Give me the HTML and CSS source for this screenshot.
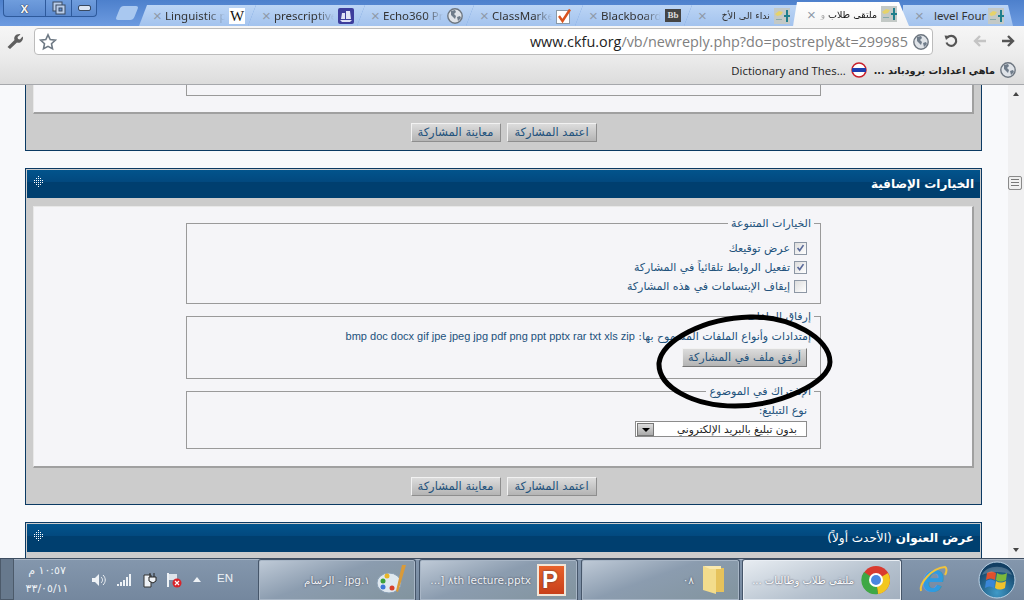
FILE: index.html
```html
<!DOCTYPE html>
<html lang="ar">

<head>
    <meta charset="UTF-8">
    <title>ملتقى طلاب وطالبات</title>
    <link rel="stylesheet" href="styles.css">
</head>

<body>
    <svg class="defs" width="0" height="0">
        <symbol id="globe" viewBox="0 0 16 16">
            <circle cx="8" cy="8" r="7.2" fill="#dfe3e8" stroke="#6d7680" stroke-width="1.4" />
            <path d="M4 3l4-1 1 2-2 2 2 2-1 3-2-2-2-2zM10 9l3-1 1 2-3 3z" fill="#6f7c8a" />
        </symbol>
        <symbol id="forum" viewBox="0 0 16 16">
            <rect width="16" height="16" fill="#c3c9c6" />
            <path d="M1 6l4-3 4 1-2 3-4 1z" fill="#e6d36a" />
            <path d="M12 2h2v12h-2zM10 7h6v2h-6z" fill="#1f7f8c" />
            <path d="M2 11h6v1H2z" fill="#8aa" />
        </symbol>
        <symbol id="grip" viewBox="0 0 9 11">
            <g fill="#fff">
                <path d="M4 0h1v1H4zM2 2h1v1H2zM4 2h1v1H4zM6 2h1v1H6zM0 4h1v1H0zM2 4h1v1H2zM4 4h1v1H4zM6 4h1v1H6zM8 4h1v1H8zM0 6h1v1H0zM2 6h1v1H2zM4 6h1v1H4zM6 6h1v1H6zM8 6h1v1H8zM2 8h1v1H2zM4 8h1v1H4zM6 8h1v1H6zM4 10h1v1H4z" />
            </g>
        </symbol>
        <symbol id="tick" viewBox="0 0 13 13">
            <path d="M3 6l2.500 3L10 2.500" fill="none" stroke="#5a6a9a" stroke-width="2" />
        </symbol>
    </svg>

    <div class="tabstrip">
        <div class="wincontrols">
            <span class="winbtn winclose">x</span>
            <span class="winbtn winrestore">
                <svg viewBox="0 0 14 14" width="14" height="14">
                    <rect x="1" y="1" width="9" height="9" fill="#b9cdea" stroke="#3a4a60" />
                    <rect x="4" y="4" width="9" height="9" fill="#b9cdea" stroke="#3a4a60" />
                    <rect x="7" y="7" width="3" height="3" fill="#5a89cf" stroke="#3a4a60" />
                </svg>
            </span>
            <span class="winbtn winmin"><i></i></span>
        </div>
        <div class="newtab"></div>
        <div class="tab">
            <span class="tabx">×</span><span class="tabtitle">Linguistic p</span>
            <span class="fav fav-w">W</span>
        </div>
        <div class="tab">
            <span class="tabx">×</span><span class="tabtitle">prescriptive</span>
            <svg class="fav" viewBox="0 0 16 16">
                <rect width="16" height="16" rx="2" fill="#3d3d9c" />
                <path d="M3 11l1-6h3v6zM8 11V3h4l1 8zM2 12h12l-2 2H4z" fill="#dfe2f5" />
            </svg>
        </div>
        <div class="tab">
            <span class="tabx">×</span><span class="tabtitle">Echo360 Pr</span>
            <svg class="fav"><use href="#globe" /></svg>
        </div>
        <div class="tab">
            <span class="tabx">×</span><span class="tabtitle">ClassMarke</span>
            <svg class="fav" viewBox="0 0 16 16">
                <rect x=".5" y="2.500" width="13" height="13" fill="#fff" stroke="#8a9aa8" />
                <path d="M3 8l3.500 5L14 1.500" fill="none" stroke="#d9531e" stroke-width="2.400" />
            </svg>
        </div>
        <div class="tab">
            <span class="tabx">×</span><span class="tabtitle">Blackboard</span>
            <span class="fav fav-bb">Bb</span>
        </div>
        <div class="tab">
            <span class="tabx">×</span><span class="tabtitle tabtitle-ar" dir="rtl">نداء الى الأخ</span>
            <svg class="fav"><use href="#forum" /></svg>
        </div>
        <div class="tab tab-active">
            <span class="tabx">×</span><span class="tabtitle tabtitle-ar" dir="rtl">ملتقى طلاب و</span>
            <svg class="fav"><use href="#forum" /></svg>
        </div>
        <div class="tab tab-last">
            <span class="tabx">×</span><span class="tabtitle tabtitle-end">level Four</span>
            <svg class="fav"><use href="#forum" /></svg>
        </div>
    </div>

    <div class="toolbar">
        <svg class="wrench" viewBox="0 0 18 18">
            <path d="M1.500 15l7-7c-1-3 1-6 5-6l1 .5-3 2.500.5 2 2 .5 2.500-3 .5 1c0 4-3 6-6 5l-7 6.500z" fill="#5f5f5f" />
        </svg>
        <div class="omnibox">
            <svg class="star" viewBox="0 0 18 18">
                <path d="M9 1.800l2.200 4.800 5.100.6-3.800 3.500 1 5.100L9 13.300l-4.500 2.500 1-5.100-3.800-3.500 5.100-.6z" fill="#fff" stroke="#6f7a85" stroke-width="1.600" />
            </svg>
            <div class="url"><b>www.ckfu.org</b>/vb/newreply.php?do=postreply&amp;t=299985</div>
            <svg class="omniglobe"><use href="#globe" /></svg>
        </div>
        <svg class="navicon nav-reload" viewBox="0 0 16 16">
            <path d="M4.500 4.500a5 5 0 1 1-1 5" fill="none" stroke="#555" stroke-width="2.200" />
            <path d="M1.500 2.500l6 .5-4.500 4z" fill="#555" />
        </svg>
        <svg class="navicon nav-back" viewBox="0 0 16 16">
            <path d="M14 8H4M8 3L3 8l5 5" fill="none" stroke="#c4c4c4" stroke-width="2.400" />
        </svg>
        <svg class="navicon nav-forward" viewBox="0 0 16 16">
            <path d="M2 8h10M8 3l5 5-5 5" fill="none" stroke="#555" stroke-width="2.400" />
        </svg>
    </div>

    <div class="bookmarks">
        <span class="bmtext">Dictionary and Thes...</span>
        <svg class="bmicon" viewBox="0 0 16 16">
            <circle cx="8" cy="8" r="7" fill="#fff" stroke="#c8202c" stroke-width="1.500" />
            <rect x="1" y="6" width="14" height="4" fill="#1c3fb0" />
        </svg>
        <span class="bmtext bmtext-ar" dir="rtl">ماهي اعدادات برودباند ...</span>
        <svg class="bmglobe"><use href="#globe" /></svg>
    </div>

    <div class="viewport">
        <div class="page">
            <div class="panel panel-cut">
                <div class="panelbody">
                    <div class="inner inner-cut">
                        <div class="cutbox"></div>
                    </div>
                    <div class="actions">
                        <span class="btn">معاينة المشاركة</span>
                        <span class="btn">اعتمد المشاركة</span>
                    </div>
                </div>
            </div>

            <div class="panel panel-options">
                <div class="panelhead">
                    <span class="paneltitle" dir="rtl">الخيارات الإضافية</span>
                    <svg class="grip"><use href="#grip" /></svg>
                </div>
                <div class="panelbody">
                    <div class="inner">
                        <fieldset class="group group-misc" dir="rtl">
                            <legend>الخيارات المتنوعة</legend>
                            <div class="checkrow"><span class="check"><svg><use href="#tick" /></svg></span>عرض توقيعك</div>
                            <div class="checkrow"><span class="check"><svg><use href="#tick" /></svg></span>تفعيل الروابط تلقائياً في المشاركة</div>
                            <div class="checkrow"><span class="check"></span>إيقاف الإبتسامات في هذه المشاركة</div>
                        </fieldset>
                        <fieldset class="group group-attach" dir="rtl">
                            <legend>إرفاق الملفات</legend>
                            <div class="exts">إمتدادات وأنواع الملفات المسموح بها: <span class="extlist" dir="ltr">bmp doc docx gif jpe jpeg jpg pdf png ppt pptx rar txt xls zip</span></div>
                            <span class="btn btn-attach">أرفق ملف في المشاركة</span>
                        </fieldset>
                        <fieldset class="group group-sub" dir="rtl">
                            <legend>الإشتراك في الموضوع</legend>
                            <div class="sublabel">نوع التبليغ:</div>
                            <div class="select">
                                <span class="selecttext">بدون تبليغ بالبريد الإلكتروني</span>
                                <span class="selectarrow"></span>
                            </div>
                        </fieldset>
                    </div>
                    <div class="actions">
                        <span class="btn">معاينة المشاركة</span>
                        <span class="btn">اعتمد المشاركة</span>
                    </div>
                </div>
            </div>

            <div class="panel panel-thread">
                <div class="panelhead">
                    <span class="paneltitle" dir="rtl">عرض العنوان <span class="lighter">(الأحدث أولاً)</span></span>
                    <svg class="grip"><use href="#grip" /></svg>
                </div>
                <div class="panelbody"></div>
            </div>
        </div>
        <div class="scrollbar">
            <span class="sb-up"></span>
            <span class="sb-thumb"></span>
            <span class="sb-down"></span>
        </div>
        <svg class="scribble" viewBox="0 0 190 105" width="190" height="105">
            <path d="M9 53C12 30 55 8 100 7c40-1 80 21 80 45 0 20-50 44-95 44C45 96 8 78 9 53z" fill="none" stroke="#000" stroke-width="5" />
        </svg>
    </div>

    <div class="taskbar">
        <div class="showdesk"></div>
        <div class="clock" dir="rtl">
            <div>١٠:٥٧ م</div>
            <div>٣٣/٠٥/١١</div>
        </div>
        <div class="tray">
            <svg viewBox="0 0 16 16">
                <path d="M1 6h3l4-4v12l-4-4H1z" fill="#eef2f6" />
                <path d="M10 5c2 2 2 4 0 6M12 3c3 3 3 7 0 10" fill="none" stroke="#eef2f6" />
            </svg>
            <svg viewBox="0 0 16 16">
                <path d="M1 12h2v2H1zM4 10h2v4H4zM7 8h2v6H7zM10 5h2v9h-2zM13 2h2v12h-2z" fill="#eef2f6" />
            </svg>
            <svg viewBox="0 0 16 16">
                <path d="M3 3h7v12H3z" fill="#eef2f6" stroke="#333" />
                <path d="M9 1v4M13 1v4M8 5h7v4l-3 2-4-2z" fill="#eef2f6" stroke="#222" />
            </svg>
            <svg viewBox="0 0 16 16">
                <path d="M2 1v14" stroke="#eef2f6" stroke-width="2" />
                <path d="M3 2h8v6H3z" fill="#dde3ea" />
                <circle cx="11" cy="11" r="4.500" fill="#d8232a" />
                <path d="M9 9l4 4M13 9l-4 4" stroke="#fff" stroke-width="1.200" />
            </svg>
            <span class="trayup"></span>
            <span class="lang">EN</span>
        </div>
        <div class="tasks">
            <div class="task">
                <span class="tasktext" dir="rtl">١.jpg - الرسام</span>
                <svg class="taskicon" viewBox="0 0 32 32">
                    <ellipse cx="13" cy="19" rx="12" ry="10" fill="#dfe8ef" stroke="#8aa0b5" />
                    <circle cx="7" cy="17" r="2.500" fill="#3aa13a" />
                    <circle cx="11" cy="12" r="2.500" fill="#e8b526" />
                    <circle cx="7" cy="23" r="2.500" fill="#3b77d8" />
                    <circle cx="16" cy="24" r="2.500" fill="#d8402c" />
                    <path d="M30 1l-8 27-2-1 6-26z" fill="#d89a3a" />
                </svg>
            </div>
            <div class="task">
                <span class="tasktext" dir="ltr">...] ٨th lecture.pptx</span>
                <span class="taskicon ppt">P</span>
            </div>
            <div class="task">
                <span class="tasktext" dir="rtl">٠٨</span>
                <svg class="taskicon" viewBox="0 0 32 32">
                    <path d="M3 2l13 3v25L3 26z" fill="#f3dc8c" />
                    <path d="M16 4h8v24h-8z" fill="#e6c25c" />
                    <path d="M3 2h18v3H10z" fill="#fae9ae" />
                </svg>
            </div>
            <div class="task task-active">
                <span class="tasktext" dir="rtl">ملتقى طلاب وطالبات ...</span>
                <svg class="taskicon" viewBox="0 0 32 32">
                    <circle cx="16" cy="16" r="14" fill="#d93a2f" />
                    <path d="M16 16L28 9a14 14 0 0 1-10 21z" fill="#f2c71e" />
                    <path d="M16 16l2 14A14 14 0 0 1 4 8z" fill="#3ea845" />
                    <circle cx="16" cy="16" r="7" fill="#fff" />
                    <circle cx="16" cy="16" r="5" fill="#4a86e0" />
                </svg>
            </div>
        </div>
        <div class="pinned">
            <div class="pin-ie">
                <span class="ie-e">e</span>
                <svg class="ie-ring" viewBox="0 0 32 32">
                    <path d="M4 27C2 20 14 4 28 3c2 1 2 4 0 8" fill="none" stroke="#f0c33c" stroke-width="2" />
                </svg>
            </div>
            <svg class="orb" viewBox="0 0 38 38">
                <defs>
                    <radialGradient id="orbfill" cx="50%" cy="85%" r="75%">
                        <stop offset="0" stop-color="#3f9ac8" />
                        <stop offset="1" stop-color="#123f63" />
                    </radialGradient>
                </defs>
                <circle cx="19" cy="19" r="18" fill="url(#orbfill)" stroke="#bcd3e6" />
                <path d="M9 12c3-2 6-2 9 0l-1 7c-3-2-6-2-9 0z" fill="#e0502c" />
                <path d="M19 12c3 2 6 2 10 0l-1 7c-4 2-7 2-10 0z" fill="#7db83a" />
                <path d="M8 20c3-2 6-2 9 0l-1 7c-3-2-6-2-9 0z" fill="#3a86d8" />
                <path d="M18 20c3 2 6 2 10 0l-1 7c-4 2-7 2-10 0z" fill="#f0c22c" />
                <path d="M4 14C8 3 30 3 34 14 26 10 12 10 4 14z" fill="#fff" opacity=".22" />
            </svg>
        </div>
    </div>
</body>

</html>
```

FILE: styles.css
```css
* {
    padding: 0;
    margin: 0;
    box-sizing: border-box;
}

html,
body {
    width: 1024px;
    height: 600px;
    overflow: hidden;
}

body {
    display: flex;
    flex-direction: column;
    background: #f8f9fb;
    font-family: "Liberation Sans", "DejaVu Sans", sans-serif;
    font-size: 11px;
    color: #22527c;
}

.defs {
    display: none;
}

/* chrome tabs */
.tabstrip {
    flex: 0 0 26px;
    height: 26px;
    display: flex;
    align-items: flex-end;
    padding-left: 3px;
    background: linear-gradient(#4d80cc, #6d9be0);
}

.wincontrols {
    display: flex;
    align-self: flex-start;
    height: 17px;
    width: 94px;
    border: 1px solid #2e5a9c;
    border-top: 0;
    border-radius: 0 0 4px 4px;
    background: linear-gradient(#6f9ddd, #5a89cf);
}

.winbtn {
    display: flex;
    align-items: center;
    justify-content: center;
    border-right: 1px solid #2e5a9c;
    color: #f2f5fa;
}

.winclose {
    width: 42px;
    font: bold 14px/16px "Liberation Sans", sans-serif;
    text-shadow: 0 0 1px #223, 0 0 1px #223;
}

.winrestore {
    width: 26px;
}

.winmin {
    flex: 1;
    border-right: 0;
}

.winmin i {
    width: 11px;
    height: 4px;
    background: #dbe5f3;
    outline: 1px solid #3a4a60;
    border-radius: 1px;
}

.newtab {
    width: 18px;
    height: 14px;
    margin: 0 3px 6px 21px;
    background: #a9c8f0;
    border-radius: 3px;
    transform: skewX(-22deg);
}

.tab {
    width: 117px;
    height: 21px;
    margin-right: -8px;
    display: flex;
    align-items: center;
    padding: 0 5px 0 14px;
    background: linear-gradient(#bcd5f5, #a3c3ee);
    clip-path: polygon(0 100%, 8px 0, 100% 0, 109px 100%);
    font: 11.500px "Noto Sans", sans-serif;
    color: #333;
    white-space: nowrap;
}

.tabx {
    width: 12px;
    flex: none;
    color: #8f9aa8;
    font: 15px "Liberation Sans", sans-serif;
}

.tabtitle {
    flex: 1;
    min-width: 0;
    -webkit-mask-image: linear-gradient(to right, #000 70%, transparent);
    mask-image: linear-gradient(to right, #000 70%, transparent);
}

.tabtitle-ar {
    font: 9.500px "DejaVu Sans", sans-serif;
    text-align: right;
    -webkit-mask-image: linear-gradient(to right, transparent, #000 20%);
    mask-image: linear-gradient(to right, transparent, #000 20%);
}

.tabtitle-end {
    padding-left: 7px;
    -webkit-mask-image: none;
    mask-image: none;
}

.fav {
    flex: none;
    width: 16px;
    height: 16px;
    margin: 0 6px 0 4px;
}

.fav-w {
    background: #fff;
    color: #111;
    font: 15px/16px "Liberation Serif", serif;
    text-align: center;
}

.fav-bb {
    background: #444;
    color: #ddd;
    font: bold 9px/13px "Liberation Serif", serif;
    text-align: center;
    height: 13px;
}

.tab-active {
    position: relative;
    z-index: 2;
    width: 116px;
    height: 24px;
    margin-right: -6px;
    padding-right: 6px;
    background: linear-gradient(#fff, #f4f4f4);
    clip-path: polygon(0 100%, 4px 0, 106px 0, 100% 100%);
    color: #111;
}

.tab-last {
    width: 110px;
    padding-left: 12px;
    padding-right: 3px;
    clip-path: polygon(0 100%, 0 0, 105px 0, 100% 100%);
}

.tab-last .fav {
    margin-left: 0;
}

/* toolbar */
.toolbar {
    flex: 0 0 30px;
    display: flex;
    align-items: center;
    background: linear-gradient(#f6f6f6, #ececec);
}

.wrench {
    width: 18px;
    height: 18px;
    margin: 0 10px 0 6px;
}

.omnibox {
    width: 899px;
    height: 27px;
    margin-top: 1px;
    display: flex;
    align-items: center;
    background: #fff;
    border: 1px solid #bcbcbc;
    border-radius: 4px;
    padding: 0 3px 0 4px;
}

.star {
    width: 18px;
    height: 18px;
}

.url {
    flex: 1;
    text-align: right;
    font: 14.400px "Open Sans", sans-serif;
    color: #808080;
    white-space: nowrap;
    padding-right: 5px;
}

.url b {
    font-weight: normal;
    color: #222;
}

.omniglobe {
    width: 16px;
    height: 16px;
}

.navicon {
    width: 16px;
    height: 16px;
    margin-left: 12px;
}

.nav-reload {
    margin-left: 10px;
}

.nav-back {
    margin-left: 13px;
}

/* bookmarks bar */
.bookmarks {
    flex: 0 0 29px;
    display: flex;
    align-items: center;
    justify-content: flex-end;
    padding-right: 8px;
    background: linear-gradient(#ececec, #dcdcdc);
    border-bottom: 1px solid #a6a8ac;
    color: #222;
    font: 11.400px "Open Sans", sans-serif;
}

.bmicon {
    width: 16px;
    height: 16px;
    margin: 0 7px 0 5px;
}

.bmtext-ar {
    font: bold 9.700px "DejaVu Sans", sans-serif;
}

.bmglobe {
    width: 16px;
    height: 16px;
    margin-left: 5px;
}

/* page */
.viewport {
    flex: 1;
    min-height: 0;
    position: relative;
    display: flex;
    overflow: hidden;
}

.page {
    width: 1008px;
    padding: 0 26px 0 25px;
}

.panel {
    border: 1px solid #0b3a63;
    background: #cccccc;
    margin-bottom: 17px;
}

.panel-cut {
    border-top: 0;
}

.panel-thread {
    margin-bottom: 0;
    height: 60px;
}

.panelhead {
    height: 28px;
    margin: 1px;
    display: flex;
    flex-direction: row-reverse;
    align-items: center;
    justify-content: space-between;
    padding: 0 6px 0 7px;
    background: linear-gradient(#02548c 0, #02497f 42%, #003f6f 43%, #003f6f 100%);
    color: #fff;
}

.paneltitle {
    font: bold 12px "DejaVu Sans", sans-serif;
}

.lighter {
    font-weight: normal;
}

.grip {
    width: 9px;
    height: 11px;
    margin-top: -5px;
}

.panelbody {
    padding: 0 7px;
}

.panel-options .panelbody {
    padding-top: 7px;
}

.inner {
    background: #f5f5f8;
    border: 1px solid #e8e8e8;
    border-bottom: 2px solid #a0a0a0;
    border-right: 2px solid #a0a0a0;
    padding-top: 10px;
    height: 262px;
}

.inner-cut {
    height: 29px;
    padding: 0;
    border-top: 0;
}

.cutbox {
    width: 635px;
    height: 11px;
    margin-left: 152px;
    border: 1px solid #9a9a9a;
    border-top: 0;
}

.actions {
    display: flex;
    justify-content: center;
    gap: 6px;
    padding: 9px 0 8px;
}

.btn {
    display: inline-block;
    height: 19px;
    font: 11.500px/17px "DejaVu Sans", sans-serif;
    color: #22527c;
    background: linear-gradient(#dcdcdc, #b4b4b4);
    border: 1px solid;
    border-color: #f2f2f2 #8e8e8e #8e8e8e #f2f2f2;
}

.actions .btn {
    width: 90px;
    text-align: center;
}

.group {
    display: block;
    width: 635px;
    margin: 0 0 6px 152px;
    border: 1px solid #9a9a9a;
    padding: 0 13px 0 14px;
    font: 11px "DejaVu Sans", sans-serif;
}

.group legend {
    margin-right: -7px;
    padding: 0 3px;
    line-height: 13px;
}

.group-misc {
    height: 87px;
}

.group-attach {
    height: 69px;
}

.group-sub {
    height: 64px;
}

.checkrow {
    display: flex;
    align-items: center;
    height: 19px;
    gap: 4px;
}

.checkrow:first-of-type {
    margin-top: 9px;
}

.check {
    width: 13px;
    height: 13px;
    background: linear-gradient(135deg, #ddd, #fff);
    border: 1px solid #8d97a5;
}

.check svg {
    display: block;
    width: 11px;
    height: 11px;
}

.exts {
    margin-top: 7px;
    margin-right: -4px;
    white-space: nowrap;
    line-height: 14px;
}

.extlist {
    font: 11px "Liberation Sans", sans-serif;
}

.btn-attach {
    width: 125px;
    margin-top: 4px;
    text-align: center;
    font-size: 11.200px;
    border-color: #f2f2f2 #777 #777 #f2f2f2;
}

.sublabel {
    margin-top: 6px;
    line-height: 14px;
}

.select {
    width: 172px;
    height: 16px;
    margin-top: 3px;
    display: flex;
    align-items: center;
    justify-content: space-between;
    padding: 0 9px 0 1px;
    background: #fff;
    border: 1px solid #8c8c8c;
    font-size: 10.500px;
    color: #222;
}

.selectarrow {
    width: 17px;
    height: 13px;
    background: linear-gradient(#dddddd, #aaaaaa);
    border: 1px solid #777;
    position: relative;
    margin-right: -4px;
}

.selectarrow::after {
    content: "";
    position: absolute;
    left: 4px;
    top: 4px;
    border: 4px solid transparent;
    border-top-color: #000;
}

.scrollbar {
    flex: 1;
    display: flex;
    flex-direction: column;
    background: #f0f0f1;
    padding: 7px 0 0 5px;
}

.sb-up,
.sb-down {
    width: 6px;
    height: 4px;
    border: 3px solid transparent;
    border-top: 0;
    border-bottom: 4px solid #444;
}

.sb-down {
    border-bottom: 0;
    border-top: 4px solid #444;
    margin-top: 358px;
}

.sb-thumb {
    width: 14px;
    height: 14px;
    margin: 80px 0 0 -5px;
    background: repeating-linear-gradient(#f1f1f1 0 2px, #777 2px 3px);
    border: 1px solid #8a8a8a;
    border-radius: 2px;
    box-shadow: inset 0 0 0 2px #eee;
}

.scribble {
    position: absolute;
    left: 650px;
    top: 225px;
    overflow: visible;
}

/* windows taskbar */
.taskbar {
    flex: 0 0 42px;
    display: flex;
    align-items: stretch;
    background: linear-gradient(#8497ad, #74879e);
    border-top: 1px solid #3d4d60;
    box-shadow: inset 0 1px 0 #a9b6c6;
    color: #eef2f6;
    position: relative;
}

.showdesk {
    width: 14px;
    background: #67798d;
    border: 1px solid #4c5a6a;
    border-top: 0;
}

.clock {
    width: 66px;
    display: flex;
    flex-direction: column;
    justify-content: center;
    gap: 5px;
    text-align: center;
    font: 11px "DejaVu Sans", sans-serif;
}

.tray {
    width: 178px;
    display: flex;
    align-items: center;
    padding-left: 11px;
}

.tray svg {
    width: 16px;
    height: 16px;
    margin-right: 9px;
}

.trayup {
    margin: 0 16px 0 2px;
    border: 4px solid transparent;
    border-top: 0;
    border-bottom: 5px solid #eef2f6;
}

.lang {
    font: 11.500px "Liberation Sans", sans-serif;
    margin-top: -4px;
}

.tasks {
    display: flex;
    gap: 3px;
    padding-right: 6px;
}

.task {
    width: 158px;
    display: flex;
    align-items: center;
    justify-content: flex-end;
    gap: 6px;
    padding: 0 7px 0 6px;
    background: linear-gradient(160deg, #c0cbd8, #8b9caf 45%, #82949e);
    border: 1px solid #46566a;
    border-bottom: 0;
    border-radius: 3px 3px 0 0;
    box-shadow: inset 0 0 0 1px #a8b6c6;
    font: 10.500px "DejaVu Sans", sans-serif;
    text-shadow: 0 0 2px #334;
}

.task:nth-child(2),
.task:nth-child(3) {
    width: 159px;
}

.task-active {
    width: 160px;
    margin-left: -1px;
    font-size: 10px;
    background: linear-gradient(160deg, #e8edf2, #b5c1ce 60%, #a2afbe);
    box-shadow: inset 0 0 0 1px #e9eef4;
    color: #fff;
    padding-right: 9px;
}

.tasktext {
    white-space: nowrap;
}

.taskicon {
    flex: none;
    width: 32px;
    height: 32px;
}

.ppt {
    width: 29px;
    height: 32px;
    margin-right: 4px;
    border: 2px solid #f2e6d8;
    background: linear-gradient(#e8622a, #c8401a);
    color: #fff;
    font: bold 24px/28px "Liberation Sans", sans-serif;
    padding-left: 3px;
}

.pinned {
    flex: 1;
    display: flex;
    align-items: center;
}

.pin-ie {
    width: 32px;
    height: 34px;
    margin-left: 9px;
    position: relative;
}

.ie-e {
    display: block;
    color: #2f9be0;
    font: bold italic 40px/30px "Liberation Sans", sans-serif;
    text-align: center;
}

.ie-ring {
    position: absolute;
    left: 0;
    top: 0;
    width: 32px;
    height: 34px;
}

.orb {
    width: 38px;
    height: 38px;
    margin-left: 29px;
}
```
